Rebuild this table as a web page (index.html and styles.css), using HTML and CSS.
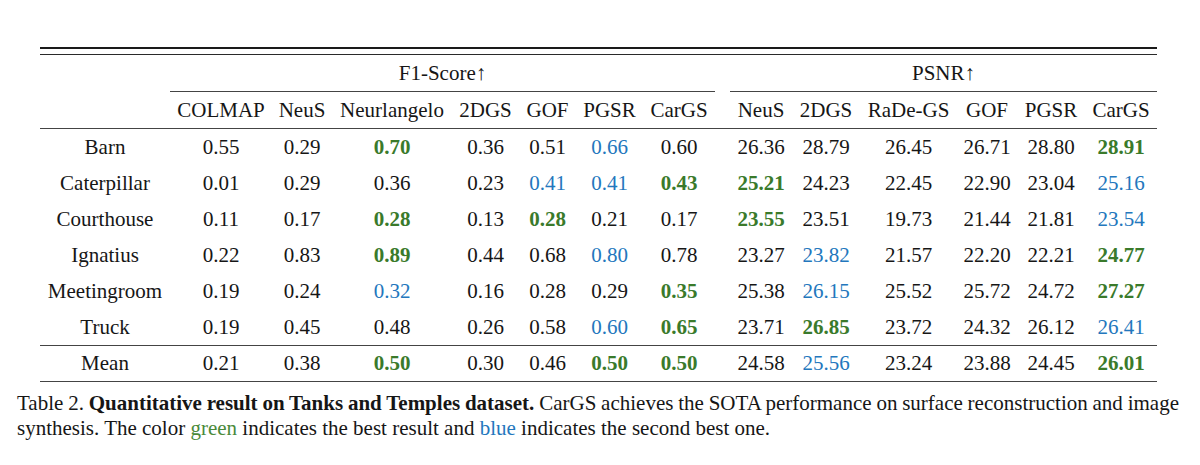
FILE: index.html
```html
<!DOCTYPE html>
<html lang="en">
<head>
<meta charset="utf-8">
<title>Table 2</title>
<link rel="stylesheet" href="styles.css">
</head>
<body>
<div class="page">
  <div class="toprule"></div>
  <table class="results">
    <colgroup>
      <col class="c-name">
      <col class="c-colmap">
      <col class="c-neus">
      <col class="c-neuralangelo">
      <col class="c-2dgs">
      <col class="c-gof">
      <col class="c-pgsr">
      <col class="c-cargs">
      <col class="c-sep">
      <col class="c-neus2">
      <col class="c-2dgs2">
      <col class="c-rade">
      <col class="c-gof2">
      <col class="c-pgsr2">
      <col class="c-cargs2">
    </colgroup>
    <thead>
      <tr class="group-row">
        <th></th>
        <th colspan="7" class="group">F1-Score↑</th>
        <th></th>
        <th colspan="6" class="group">PSNR↑</th>
      </tr>
      <tr class="method-row">
        <th></th>
        <th>COLMAP</th><th>NeuS</th><th>Neurlangelo</th><th>2DGS</th><th>GOF</th><th>PGSR</th><th>CarGS</th>
        <th></th>
        <th>NeuS</th><th>2DGS</th><th>RaDe-GS</th><th>GOF</th><th>PGSR</th><th>CarGS</th>
      </tr>
    </thead>
    <tbody>
      <tr>
        <td>Barn</td>
        <td>0.55</td><td>0.29</td><td class="best">0.70</td><td>0.36</td><td>0.51</td><td class="second">0.66</td><td>0.60</td>
        <td></td>
        <td>26.36</td><td>28.79</td><td>26.45</td><td>26.71</td><td>28.80</td><td class="best">28.91</td>
      </tr>
      <tr>
        <td>Caterpillar</td>
        <td>0.01</td><td>0.29</td><td>0.36</td><td>0.23</td><td class="second">0.41</td><td class="second">0.41</td><td class="best">0.43</td>
        <td></td>
        <td class="best">25.21</td><td>24.23</td><td>22.45</td><td>22.90</td><td>23.04</td><td class="second">25.16</td>
      </tr>
      <tr>
        <td>Courthouse</td>
        <td>0.11</td><td>0.17</td><td class="best">0.28</td><td>0.13</td><td class="best">0.28</td><td>0.21</td><td>0.17</td>
        <td></td>
        <td class="best">23.55</td><td>23.51</td><td>19.73</td><td>21.44</td><td>21.81</td><td class="second">23.54</td>
      </tr>
      <tr>
        <td>Ignatius</td>
        <td>0.22</td><td>0.83</td><td class="best">0.89</td><td>0.44</td><td>0.68</td><td class="second">0.80</td><td>0.78</td>
        <td></td>
        <td>23.27</td><td class="second">23.82</td><td>21.57</td><td>22.20</td><td>22.21</td><td class="best">24.77</td>
      </tr>
      <tr>
        <td>Meetingroom</td>
        <td>0.19</td><td>0.24</td><td class="second">0.32</td><td>0.16</td><td>0.28</td><td>0.29</td><td class="best">0.35</td>
        <td></td>
        <td>25.38</td><td class="second">26.15</td><td>25.52</td><td>25.72</td><td>24.72</td><td class="best">27.27</td>
      </tr>
      <tr class="last-row">
        <td>Truck</td>
        <td>0.19</td><td>0.45</td><td>0.48</td><td>0.26</td><td>0.58</td><td class="second">0.60</td><td class="best">0.65</td>
        <td></td>
        <td>23.71</td><td class="best">26.85</td><td>23.72</td><td>24.32</td><td>26.12</td><td class="second">26.41</td>
      </tr>
    </tbody>
    <tbody class="mean">
      <tr class="mean-row">
        <td>Mean</td>
        <td>0.21</td><td>0.38</td><td class="best">0.50</td><td>0.30</td><td>0.46</td><td class="best">0.50</td><td class="best">0.50</td>
        <td></td>
        <td>24.58</td><td class="second">25.56</td><td>23.24</td><td>23.88</td><td>24.45</td><td class="best">26.01</td>
      </tr>
    </tbody>
  </table>
  <p class="caption">Table 2. <b>Quantitative result on Tanks and Temples dataset.</b> CarGS achieves the SOTA performance on surface reconstruction and image synthesis. The color <span class="c-green">green</span> indicates the best result and <span class="c-blue">blue</span> indicates the second best one.</p>
</div>
</body>
</html>
```

FILE: styles.css
```css
html, body {
  margin: 0;
  padding: 0;
  background: #ffffff;
}

body {
  font-family: "Liberation Serif", "Times New Roman", serif;
  color: #161616;
  width: 1200px;
  height: 465px;
  overflow: hidden;
}

.page {
  padding-top: 47px;
}

.toprule {
  margin-left: 40px;
  width: 1117px;
  height: 5px;
  border-top: 2px solid #1a1a1a;
  border-bottom: 1px solid #2a2a2a;
}

.results {
  margin-left: 40px;
  width: 1117px;
  table-layout: fixed;
  border-collapse: separate;
  border-spacing: 0;
  font-size: 21px;
}

.results th,
.results td {
  padding: 0;
  text-align: center;
  vertical-align: middle;
  font-weight: normal;
  white-space: nowrap;
}

.c-name { width: 130px; }
.c-colmap { width: 102px; }
.c-neus { width: 60px; }
.c-neuralangelo { width: 120px; }
.c-2dgs { width: 67px; }
.c-gof { width: 57px; }
.c-pgsr { width: 67px; }
.c-cargs { width: 72px; }
.c-sep { width: 15px; }
.c-neus2 { width: 62px; }
.c-2dgs2 { width: 68px; }
.c-rade { width: 97px; }
.c-gof2 { width: 60px; }
.c-pgsr2 { width: 68px; }
.c-cargs2 { width: 72px; }

.group-row { height: 37px; }
.group-row .group { border-bottom: 1px solid #444; }

.method-row { height: 37px; }
.method-row th { border-bottom: 1px solid #444; }

.results tbody tr { height: 36px; }
.results tbody tr.last-row { height: 37px; }
.last-row td { border-bottom: 1px solid #444; }

.mean-row { height: 37px; }
.mean-row td { border-bottom: 1px solid #444; }

.results td.best {
  color: #3a7a2b;
  font-weight: bold;
}

.results td.second {
  color: #2377bd;
}

.caption {
  margin: 9px 0 0 17px;
  width: 1162px;
  font-size: 21px;
  line-height: 25px;
  text-align: justify;
}

.caption::first-line {
  word-spacing: -1.2px;
}

.caption b { font-weight: bold; }
.c-green { color: #4a8a3a; }
.c-blue { color: #2377bd; }
```
